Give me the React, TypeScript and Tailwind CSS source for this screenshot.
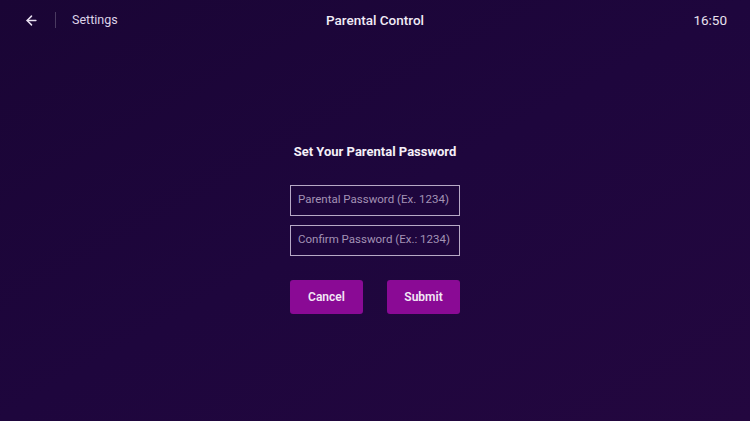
import { ArrowLeft } from "lucide-react";

export default function App() {
  return (
    <div
      className="relative flex h-[421px] w-[750px] flex-col overflow-hidden bg-gradient-to-br from-[#1a0535] via-[#1e063d] to-[#23073f] text-white"
      style={{ fontFamily: "Roboto, 'Liberation Sans', sans-serif" }}
    >
      {/* header */}
      <div className="relative flex h-[40px] items-center px-[24px]">
        <ArrowLeft size={15} strokeWidth={2.4} className="text-[#e8e0f0]" />
        <div className="ml-[16px] h-[16px] w-px bg-[#4a3a60]" />
        <span className="ml-[16px] text-[12.5px] text-[#ddd3e8]">Settings</span>
        <span className="absolute left-1/2 -translate-x-1/2 text-[13.5px] font-medium text-[#f1ebf6]">
          Parental Control
        </span>
        <span className="ml-auto mr-[-1px] text-[13.5px] text-[#e9e2ef]">16:50</span>
      </div>

      {/* form */}
      <div className="mt-[102px] flex flex-col items-center">
        <h1 className="text-[13px] font-bold text-[#f5f0f8]">Set Your Parental Password</h1>
        <div className="mt-[23px] flex w-[170px] flex-col gap-[9px]">
          <div className="flex h-[31px] items-center border-[1.5px] border-[#b7a9c6] px-[7px] text-[11.5px] text-[#a392b5]">
            Parental Password (Ex. 1234)
          </div>
          <div className="flex h-[31px] items-center border-[1.5px] border-[#b7a9c6] px-[7px] text-[11.5px] text-[#a392b5]">
            Confirm Password (Ex.: 1234)
          </div>
        </div>
        <div className="mt-[24px] flex w-[170px] justify-between">
          <button className="flex h-[34px] w-[73px] items-center justify-center rounded-[3px] bg-[#8a0a95] text-[12px] font-semibold text-[#f3e8f5]">
            Cancel
          </button>
          <button className="flex h-[34px] w-[73px] items-center justify-center rounded-[3px] bg-[#8a0a95] text-[12px] font-semibold text-[#f3e8f5]">
            Submit
          </button>
        </div>
      </div>
    </div>
  );
}
